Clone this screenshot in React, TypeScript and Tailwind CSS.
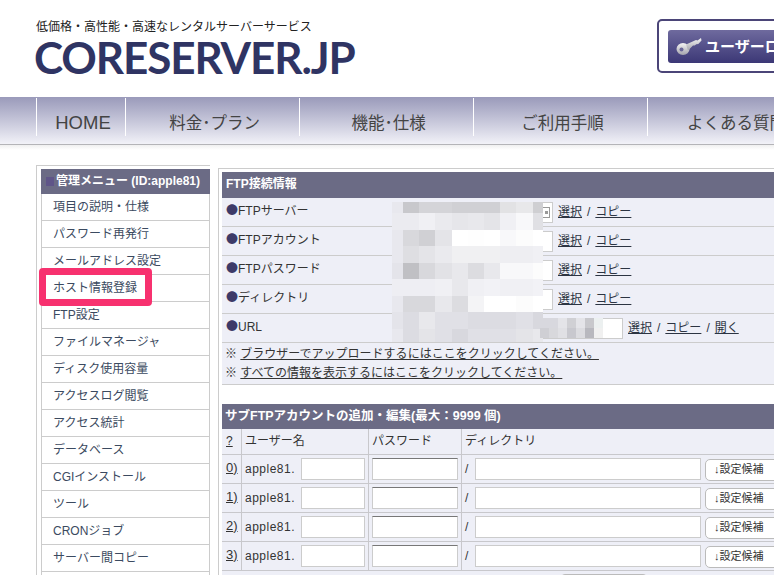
import React from "react";

const menuItems = [
  "項目の説明・仕様",
  "パスワード再発行",
  "メールアドレス設定",
  "ホスト情報登録",
  "FTP設定",
  "ファイルマネージャ",
  "ディスク使用容量",
  "アクセスログ閲覧",
  "アクセス統計",
  "データベース",
  "CGIインストール",
  "ツール",
  "CRONジョブ",
  "サーバー間コピー",
  "バックアップ",
];

const navItems = [
  { label: "HOME", width: "w-[89px]", size: "text-[18.5px]" },
  { label: "料金･プラン", width: "w-[174px]", size: "text-[16.5px]" },
  { label: "機能･仕様", width: "w-[174px]", size: "text-[16.5px]" },
  { label: "ご利用手順", width: "w-[174px]", size: "text-[16.5px]" },
  { label: "よくある質問", width: "w-[174px]", size: "text-[16.5px]" },
];

const ftpRows = [
  { label: "FTPサーバー", icon: true },
  { label: "FTPアカウント" },
  { label: "FTPパスワード" },
  { label: "ディレクトリ" },
  { label: "URL", wide: true },
];

// hand sampled cells of the blurred-out area
const mosaicMain = [
  ["bg-[#e8e8ee]", "bg-[#c8c8cc]", "bg-[#d4d4d8]", "bg-[#d4d4d8]", "bg-[#d0d0d4]", "bg-[#d0d0d4]", "bg-[#d0d0d4]", "bg-[#e2e2e4]", "bg-[#e8e8ea]", "bg-[#cfcfd2]"],
  ["bg-[#ebebf0]", "bg-[#ebebf0]", "bg-[#f0f0f4]", "bg-[#eaeaee]", "bg-[#e6e6ea]", "bg-[#e8e8ec]", "bg-[#e4e4e8]", "bg-[#f0f0f4]", "bg-[#f8f8fa]", "bg-[#e0e0e4]"],
  ["bg-[#e8e8ee]", "bg-[#d8d8dc]", "bg-[#d0d0d4]", "bg-[#e4e4e8]", "bg-[#ffffff]", "bg-[#fefefe]", "bg-[#ffffff]", "bg-[#f8f8fa]", "bg-[#fcfcfc]", "bg-[#ffffff]"],
  ["bg-[#e8e8ee]", "bg-[#dedee2]", "bg-[#e4e4e8]", "bg-[#eaeaee]", "bg-[#f0f0f2]", "bg-[#f0f0f2]", "bg-[#f0f0f2]", "bg-[#eeeef2]", "bg-[#eeeef2]", "bg-[#f0f0f4]"],
  ["bg-[#e4e4ea]", "bg-[#c0c0c4]", "bg-[#d8d8dc]", "bg-[#e2e2e6]", "bg-[#e8e8ec]", "bg-[#dcdce0]", "bg-[#e8e8ec]", "bg-[#f8f8fa]", "bg-[#f8f8fa]", "bg-[#fcfcfc]"],
  ["bg-[#eeeef3]", "bg-[#eeeef3]", "bg-[#eeeef3]", "bg-[#f0f0f4]", "bg-[#e8e8ec]", "bg-[#f0f0f4]", "bg-[#f2f2f6]", "bg-[#f0f0f4]", "bg-[#f0f0f4]", "bg-[#f2f2f6]"],
  ["bg-[#e8e8ee]", "bg-[#d8d8dc]", "bg-[#d8d8dc]", "bg-[#e8e8ec]", "bg-[#dcdce0]", "bg-[#f4f4f6]", "bg-[#ffffff]", "bg-[#ffffff]", "bg-[#fcfcfc]", "bg-[#ffffff]"],
  ["bg-[#e4e4ea]", "bg-[#dcdce2]", "bg-[#e8e8ec]", "bg-[#e0e0e6]", "bg-[#e0e0e6]", "bg-[#dcdce2]", "bg-[#dcdce2]", "bg-[#dcdce2]", "bg-[#e0e0e6]", "bg-[#d8d8de]"],
  ["bg-[#e8e8ee]", "bg-[#dcdce2]", "bg-[#e4e4e8]", "bg-[#e0e0e6]", "bg-[#d8d8de]", "bg-[#e0e0e6]", "bg-[#e0e0e6]", "bg-[#e0e0e6]", "bg-[#e4e4e8]", "bg-[#e8e8ec]"],
];

const mosaicUrl = [
  "bg-[#d8d8de]", "bg-[#d8d8de]", "bg-[#e4e4e8]", "bg-[#d0d0d4]", "bg-[#e4e4e8]", "bg-[#c8c8cc]", "bg-[#ecf0f0]",
  "bg-[#cfcfd4]", "bg-[#d8d8dc]", "bg-[#e0e0e4]", "bg-[#c8c8ce]", "bg-[#dcdce0]", "bg-[#b8b8be]", "bg-[#f0f0f0]",
];

function KeyIcon() {
  return (
    <svg width="26" height="20" viewBox="0 0 26 20" className="shrink-0">
      <defs>
        <linearGradient id="keyMetal" x1="0" y1="0" x2="0" y2="1">
          <stop offset="0" stopColor="#f4f4f4" />
          <stop offset="1" stopColor="#a4a4ac" />
        </linearGradient>
      </defs>
      <ellipse cx="7" cy="12" rx="6.5" ry="6" fill="url(#keyMetal)" />
      <path d="M10 7.5 20 3l1.5.4L25 1l.5 2.5-3.2 3.6-2 .1-1.6 1.4-1.7-.2L12 13.5z" fill="url(#keyMetal)" />
      <circle cx="5.5" cy="12.5" r="2" fill="#6a6698" />
    </svg>
  );
}

function Links({ open }: { open?: boolean }) {
  return (
    <span className="ml-[5px] whitespace-nowrap text-[#2c3442]">
      <a className="underline">選択</a>
      <span className="mx-[5px]">/</span>
      <a className="underline">コピー</a>
      {open && (
        <>
          <span className="mx-[5px]">/</span>
          <a className="underline">開く</a>
        </>
      )}
    </span>
  );
}

function SubRow({ index }: { index: number }) {
  return (
    <div className="grid h-[29px] grid-cols-[20px_127px_93px_1fr] border-b border-[#c8c8cc]">
      <div className="flex items-center border-r border-[#c8c8cc] pb-[4px] pl-[4px] text-[13px] underline">{index})</div>
      <div className="flex items-center border-r border-[#c8c8cc] pl-[3px]">
        <span className="w-[56px] text-[#333] tracking-[0.5px]">apple81.</span>
        <input readOnly className="h-[22px] w-[64px] border border-[#ccc] bg-white" />
      </div>
      <div className="flex items-center border-r border-[#c8c8cc] pl-[3px]">
        <input readOnly className="h-[22px] w-[86px] border border-[#ccc] border-t-[#777] bg-white" />
      </div>
      <div className="flex items-center pl-[3px]">
        <span className="w-[10px]">/</span>
        <input readOnly className="h-[22px] w-[226px] border border-[#ccc] bg-white" />
        <button className="ml-[4px] mt-[1px] h-[22px] w-[80px] rounded-[5px] border border-[#bbb] bg-white pl-[8px] text-left text-[11px] text-[#333]">
          ↓設定候補
        </button>
      </div>
    </div>
  );
}

export default function App() {
  return (
    <div className="relative h-[575px] w-[774px] overflow-hidden bg-white text-[12px] leading-[19px] text-[#333] [font-family:'Liberation_Sans','Noto_Sans_CJK_JP',sans-serif]">
      {/* Header */}
      <header className="relative h-[97px]">
        <div className="pl-[36px] pt-[18px] text-[12px] leading-[18px] text-[#222]">
          低価格・高性能・高速なレンタルサーバーサービス
        </div>
        <div className="pl-[34px] text-[44px] font-bold leading-[42px] tracking-[-1.1px] text-[#2f3463] [font-family:Lato,sans-serif]">
          CORESERVER.JP
        </div>
        <div className="absolute left-[657px] top-[19px] h-[54px] w-[160px] rounded-[5px] border-2 border-[#4b4578] bg-white p-[9px]">
          <div className="flex h-[33px] items-center gap-[3px] rounded-[3px] bg-gradient-to-b from-[#6f6a9e] to-[#3c3876] pl-[8px] text-[15px] font-bold whitespace-nowrap text-white">
            <KeyIcon />
            ユーザーログイン
          </div>
        </div>
      </header>

      {/* Nav */}
      <nav className="flex h-[48px] border-b border-[#b4b4b8] bg-gradient-to-b from-[#9a9aba] to-[#f2f2f8] pl-[36px]">
        {navItems.map((item) => (
          <div
            key={item.label}
            className={`${item.width} ${item.size} mt-[1px] h-[38px] shrink-0 border-l border-white pl-[4px] pt-[13px] text-center leading-[24px] whitespace-nowrap text-[#444]`}
          >
            {item.label}
          </div>
        ))}
      </nav>
      <div className="h-[5px] bg-gradient-to-b from-[#f0f0f0] to-white" />

      <div className="flex items-start pl-[36px] pt-[15px]">
        {/* Sidebar */}
        <aside className="w-[174px] shrink-0 border-l border-t border-[#ccc] pl-[4px] pt-[3px]">
          <div className="flex h-[25px] items-center bg-[#6b6b85] pl-[5px] font-bold text-white">
            <span className="mr-[2px] h-[9px] w-[8px] bg-[#5f5588]" />
            管理メニュー (ID:apple81)
          </div>
          <ul className="border-x border-[#ccc]">
            {menuItems.map((item) => (
              <li key={item} className="flex h-[27px] items-center border-b border-[#ccc] pl-[11px] text-[#3b4a60]">
                {item}
              </li>
            ))}
          </ul>
        </aside>

        {/* Main */}
        <main className="ml-[8px] mt-[3px] w-[700px] shrink-0 border-l border-t border-[#ccc] pl-[3px] pt-[3px]">
          <section className="border-b border-[#ccc] bg-[#eeeff7]">
            <h2 className="flex h-[26px] items-center bg-[#6b6b85] pb-[1px] pl-[4px] text-[12px] font-bold text-white">FTP接続情報</h2>
            {ftpRows.map((row) => (
              <div key={row.label} className="flex h-[29px] items-center border-b border-[#ccc] pl-[4px]">
                <span className="w-[172px] pb-[3px]">
                  <span className="text-[#3d3a68] [font-family:'Noto_Sans_CJK_JP',sans-serif]">●</span>
                  {row.label}
                </span>
                <div className="relative">
                  <input readOnly className={`${row.wide ? "w-[225px]" : "w-[155px]"} block h-[21px] border border-[#ccc] bg-white`} />
                  {row.icon && (
                    <span className="absolute right-[3px] top-[5px] flex h-[11px] w-[8px] items-center justify-center border border-[#999]">
                      <span className="h-[3px] w-[3px] bg-[#999]" />
                    </span>
                  )}
                </div>
                <Links open={row.wide} />
              </div>
            ))}
            <div className="pb-[1px] pl-[3px] pt-[2px]">
              <p>※ <a className="underline">ブラウザーでアップロードするにはここをクリックしてください。</a></p>
              <p>※ <a className="underline">すべての情報を表示するにはここをクリックしてください。</a></p>
            </div>
          </section>

          <section className="mt-[19px] bg-[#eeeff7]">
            <h2 className="flex h-[25px] items-center bg-[#6b6b85] pl-[3px] text-[12.5px] font-bold text-white">
              サブFTPアカウントの追加・編集(最大：9999 個)
            </h2>
            <div className="grid h-[26px] grid-cols-[20px_127px_93px_1fr] border-b border-[#c8c8cc]">
              <div className="flex items-center border-r border-[#c8c8cc] pl-[4px] underline">?</div>
              <div className="flex items-center border-r border-[#c8c8cc] pl-[3px]">ユーザー名</div>
              <div className="flex items-center border-r border-[#c8c8cc] pl-[3px]">パスワード</div>
              <div className="flex items-center pl-[3px]">ディレクトリ</div>
            </div>
            {[0, 1, 2, 3].map((i) => (
              <SubRow key={i} index={i} />
            ))}
            <div className="flex h-[30px] pl-[338px] pt-[3px]">
              <button className="h-[22px] w-[88px] rounded-[5px] border border-[#bbb] bg-white" />
            </div>
          </section>
        </main>
      </div>

      {/* Blur over the account details */}
      <div className="absolute left-[392px] top-[202px] grid grid-cols-[11px_16px_16px_17px_16px_16px_16px_16px_17px_10px] grid-rows-[11px_17px_16px_17px_16px_17px_16px_17px_13px]">
        {mosaicMain.flat().map((cell, i) => (
          <div key={i} className={cell} />
        ))}
      </div>
      <div className="absolute left-[540px] top-[318px] grid grid-cols-[repeat(7,9px)] grid-rows-[10px_10px]">
        {mosaicUrl.map((cell, i) => (
          <div key={i} className={cell} />
        ))}
      </div>

      {/* Pink highlight on the menu item */}
      <div className="absolute left-[39px] top-[268px] h-[38px] w-[113px] rounded-[4px] border-[7px] border-[#f7316f]" />
    </div>
  );
}
